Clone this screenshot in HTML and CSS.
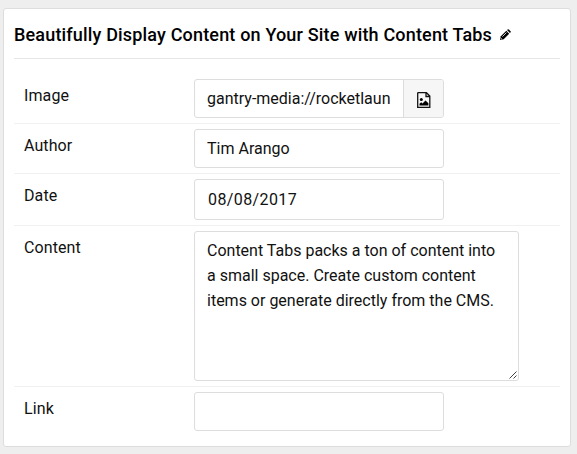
FILE: index.html
```html
<!DOCTYPE html>
<html lang="en">
<head>
<meta charset="utf-8">
<title>Content Tabs</title>
<link rel="stylesheet" href="styles.css">
</head>
<body>
<main class="card">
  <h1 class="title"><span>Beautifully Display Content on Your Site with Content Tabs</span>
    <svg class="pencil" viewBox="0 0 12 12"><path d="M1 11l.8-3.7L7.300 1.800l2.900 2.900L4.700 10.200z"/><path d="M8 1.100l.7-.7q.5-.4 1 0l1.900 1.900q.4.500 0 1l-.7.700z"/><path d="M3.400 7.600l4-4M1.700 9l1.300 1.300" stroke="#fff" stroke-width=".8"/></svg>
  </h1>
  <div class="rows">
    <div class="row">
      <span class="label">Image</span>
      <div class="field group"><span class="value">gantry-media://rocketlaun</span><span class="picker"><svg class="file" viewBox="0 0 14 16"><path class="outline" d="M1.200.7h8.200l3.400 3.400v11.200H.7V1.200q0-.5.500-.5zM9 .8v3.700h3.700"/><circle cx="4.300" cy="7.600" r="1.500"/><path d="M2.500 13.500v-1.700l1.700-1.600 1.300 1.200 3-3 2.900 2.900v2.200z"/></svg></span></div>
    </div>
    <div class="row"><span class="label">Author</span><div class="field">Tim Arango</div></div>
    <div class="row"><span class="label">Date</span><div class="field date">08/08/2017</div></div>
    <div class="row area-row"><span class="label">Content</span><div class="field area">Content Tabs packs a ton of content into<br>a small space. Create custom content<br>items or generate directly from the CMS.<svg class="grip" viewBox="0 0 8 8"><path d="M.5 7.500l7-7M4.500 7.500l3-3"/></svg></div></div>
    <div class="row"><span class="label">Link</span><div class="field"></div></div>
  </div>
</main>
</body>
</html>
```
FILE: styles.css
```css
* { box-sizing: border-box; }
body {
  margin: 0;
  padding: 8px 5px 7px 3px;
  background: #eee;
  color: #111;
  font: 16px/25px Roboto, "Liberation Sans", sans-serif;
}
.card {
  width: 568px;
  height: 439px;
  padding: 0 10px;
  background: #fff;
  border: 1px solid #ddd;
  border-radius: 3px;
}
.title {
  display: flex;
  align-items: center;
  height: 50px;
  margin: 0;
  padding-top: 2px;
  border-bottom: 1px solid #e6e6e6;
  color: #000;
  font-size: 18px;
  font-weight: 500;
  letter-spacing: .17px;
  white-space: nowrap;
}
.pencil { width: 12px; height: 12px; margin-left: 7px; }
.rows { padding-top: 15px; }
.row {
  display: flex;
  align-items: flex-start;
  padding: 5px 0 5px 10px;
  border-bottom: 1px solid #f1f1f1;
}
.row:last-child { border-bottom: 0; }
.label { width: 170px; padding-top: 4px; letter-spacing: .1px; }
.field {
  width: 250px;
  height: 39px;
  padding: 6px 12px;
  border: 1px solid #ddd;
  border-radius: 3px;
  white-space: nowrap;
}
.group { display: flex; padding: 0; overflow: hidden; }
.value { flex: 1; padding: 6px 12px; }
.picker {
  display: flex;
  flex: none;
  align-items: center;
  justify-content: center;
  width: 40px;
  background: #f6f6f6;
  border-left: 1px solid #ddd;
}
.file { width: 14px; height: 16px; margin-top: 2px; }
.outline { fill: none; stroke: #111; stroke-width: 1.3; }
.date { height: 41px; padding: 7px 13px; letter-spacing: .4px; }
.area { position: relative; width: 325px; height: 150px; }
.grip {
  position: absolute;
  right: 1px;
  bottom: 1px;
  width: 8px;
  height: 8px;
  fill: none;
  stroke: #444;
}
```
